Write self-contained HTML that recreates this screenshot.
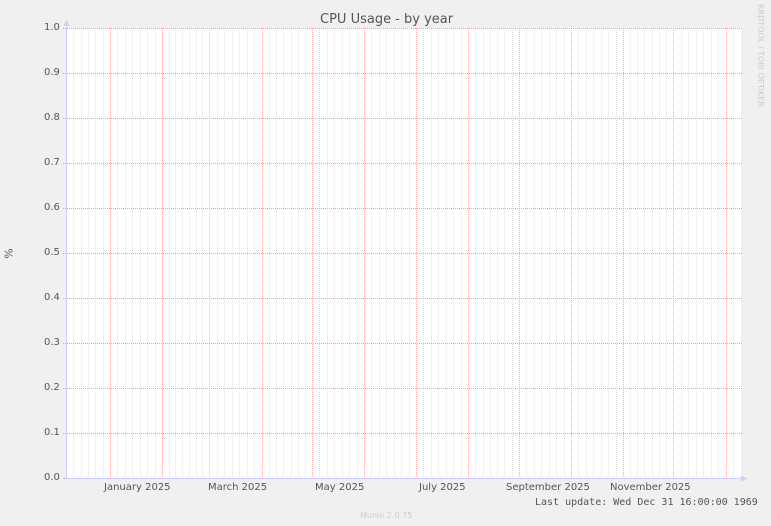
<!DOCTYPE html><html><head><style>
body{margin:0;width:771px;height:526px;background:#f0f0f0;font-family:"DejaVu Sans","Liberation Sans",sans-serif;position:relative;overflow:hidden}
.t{position:absolute;color:#555;font-size:10px;white-space:nowrap}
#plot{position:absolute;left:67px;top:28px;width:675px;height:450px;background:#fff}
</style></head><body>
<div id="plot"></div>
<div id="lines"></div>
<div class="t" style="left:320px;top:12px;font-size:13px;color:#555">CPU Usage - by year</div>
<div class="t" style="left:4px;top:247px;font-size:11px;transform:rotate(-90deg);transform-origin:center">%</div>
<div class="t" style="left:756px;top:4px;font-size:8px;color:#ccc;writing-mode:vertical-rl">RRDTOOL / TOBI OETIKER</div>
<div class="t" style="left:44px;top:22px">1.0</div>
<div class="t" style="left:44px;top:67px">0.9</div>
<div class="t" style="left:44px;top:112px">0.8</div>
<div class="t" style="left:44px;top:157px">0.7</div>
<div class="t" style="left:44px;top:202px">0.6</div>
<div class="t" style="left:44px;top:247px">0.5</div>
<div class="t" style="left:44px;top:292px">0.4</div>
<div class="t" style="left:44px;top:337px">0.3</div>
<div class="t" style="left:44px;top:382px">0.2</div>
<div class="t" style="left:44px;top:427px">0.1</div>
<div class="t" style="left:44px;top:472px">0.0</div>
<div class="t" style="left:104px;top:482px">January 2025</div>
<div class="t" style="left:208px;top:482px">March 2025</div>
<div class="t" style="left:315px;top:482px">May 2025</div>
<div class="t" style="left:419px;top:482px">July 2025</div>
<div class="t" style="left:506px;top:482px">September 2025</div>
<div class="t" style="left:610px;top:482px">November 2025</div>
<div class="t" style="left:535px;top:497px;font-family:'DejaVu Sans Mono','Liberation Mono',monospace;font-size:10px">Last update: Wed Dec 31 16:00:00 1969</div>
<div class="t" style="left:360px;top:511px;font-size:8px;color:#ccc">Munin 2.0.75</div>
<script>
var s='<svg width="771" height="526" style="position:absolute;left:0;top:0">';
var reds=[110,162,262,312,364,416,468,519,571,623,673,726];
var months=[58.5,110,162,209,262,312,364,416,468,519,571,623,673,726,778];
for(var i=0;i<months.length-1;i++){var a=months[i],b=months[i+1],st=(b-a)/7;for(var k=1;k<7;k++){var x=Math.round(a+k*st)+0.5;if(x>67&&x<742)s+='<line x1="'+x+'" y1="28" x2="'+x+'" y2="478" stroke="#e2e2e2" stroke-dasharray="1,1"/>';}}
s+='<line x1="209.5" y1="28" x2="209.5" y2="478" stroke="#cccccc" stroke-dasharray="1,1"/>';
reds.forEach(function(x){s+='<line x1="'+(x+0.5)+'" y1="28" x2="'+(x+0.5)+'" y2="478" stroke="#f7a8a8" stroke-dasharray="1,1"/>';});
for(var j=0;j<10;j++){var y=28+45*j+0.5;s+='<line x1="63" y1="'+y+'" x2="742" y2="'+y+'" stroke="#c8b4b4" stroke-dasharray="1,1"/>';}
s+='<line x1="63" y1="478.5" x2="67" y2="478.5" stroke="#c4b0b0"/>';
s+='<line x1="66.5" y1="24" x2="66.5" y2="479" stroke="#ccccff"/>';
s+='<polygon points="63.5,26 66.5,20 69.5,26" fill="#ccccff"/>';
s+='<line x1="66" y1="478.5" x2="742" y2="478.5" stroke="#ccccff"/>';
s+='<polygon points="741,475.5 747,478.5 741,481.5" fill="#ccccff"/>';
s+='</svg>';
document.getElementById('lines').innerHTML=s;
</script>
</body></html>
